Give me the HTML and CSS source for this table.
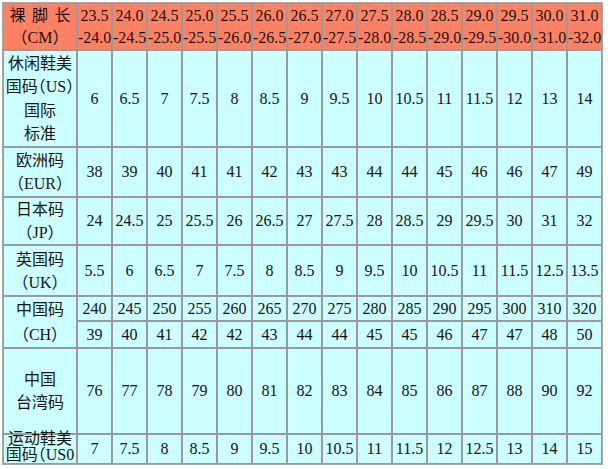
FILE: index.html
```html
<!DOCTYPE html>
<html lang="zh">
<head>
<meta charset="utf-8">
<title>鞋码对照表</title>
<link rel="stylesheet" href="styles.css">
</head>
<body>
<table class="size-table">
  <tr class="r-head">
    <td class="label head-label"><span class="spaced">裸 脚 长</span><br>（CM）</td>
    <td>23.5<br>-24.0</td><td>24.0<br>-24.5</td><td>24.5<br>-25.0</td><td>25.0<br>-25.5</td><td>25.5<br>-26.0</td><td>26.0<br>-26.5</td><td>26.5<br>-27.0</td><td>27.0<br>-27.5</td><td>27.5<br>-28.0</td><td>28.0<br>-28.5</td><td>28.5<br>-29.0</td><td>29.0<br>-29.5</td><td>29.5<br>-30.0</td><td>30.0<br>-31.0</td><td>31.0<br>-32.0</td>
  </tr>
  <tr class="r-us">
    <td class="label us-label">休闲鞋美<br>国码（US）<br>国际<br>标准</td>
    <td>6</td><td>6.5</td><td>7</td><td>7.5</td><td>8</td><td>8.5</td><td>9</td><td>9.5</td><td>10</td><td>10.5</td><td>11</td><td>11.5</td><td>12</td><td>13</td><td>14</td>
  </tr>
  <tr class="r-eur">
    <td class="label">欧洲码<br>（EUR）</td>
    <td>38</td><td>39</td><td>40</td><td>41</td><td>41</td><td>42</td><td>43</td><td>43</td><td>44</td><td>44</td><td>45</td><td>46</td><td>46</td><td>47</td><td>49</td>
  </tr>
  <tr class="r-jp">
    <td class="label">日本码<br>（JP）</td>
    <td>24</td><td>24.5</td><td>25</td><td>25.5</td><td>26</td><td>26.5</td><td>27</td><td>27.5</td><td>28</td><td>28.5</td><td>29</td><td>29.5</td><td>30</td><td>31</td><td>32</td>
  </tr>
  <tr class="r-uk">
    <td class="label">英国码<br>（UK）</td>
    <td>5.5</td><td>6</td><td>6.5</td><td>7</td><td>7.5</td><td>8</td><td>8.5</td><td>9</td><td>9.5</td><td>10</td><td>10.5</td><td>11</td><td>11.5</td><td>12.5</td><td>13.5</td>
  </tr>
  <tr class="r-ch1">
    <td class="label ch-label" rowspan="2">中国码<br>（CH）</td>
    <td>240</td><td>245</td><td>250</td><td>255</td><td>260</td><td>265</td><td>270</td><td>275</td><td>280</td><td>285</td><td>290</td><td>295</td><td>300</td><td>310</td><td>320</td>
  </tr>
  <tr class="r-ch2">
    <td>39</td><td>40</td><td>41</td><td>42</td><td>42</td><td>43</td><td>44</td><td>44</td><td>45</td><td>45</td><td>46</td><td>47</td><td>47</td><td>48</td><td>50</td>
  </tr>
  <tr class="r-tw">
    <td class="label">中国<br>台湾码</td>
    <td>76</td><td>77</td><td>78</td><td>79</td><td>80</td><td>81</td><td>82</td><td>83</td><td>84</td><td>85</td><td>86</td><td>87</td><td>88</td><td>90</td><td>92</td>
  </tr>
  <tr class="r-sport">
    <td class="label sport-label"><div class="sport-text">运动鞋美<br>国码（US0</div></td>
    <td>7</td><td>7.5</td><td>8</td><td>8.5</td><td>9</td><td>9.5</td><td>10</td><td>10.5</td><td>11</td><td>11.5</td><td>12</td><td>12.5</td><td>13</td><td>14</td><td>15</td>
  </tr>
</table>
</body>
</html>
```

FILE: styles.css
```css
html, body {
  margin: 0;
  padding: 0;
  background: #ffffff;
}

body {
  padding: 2px 0 0 2px;
}

.size-table {
  table-layout: fixed;
  width: 601px;
  border-collapse: separate;
  border-spacing: 0;
  border: 1px solid #a9a9a9;
  font-family: "Liberation Serif", "Noto Sans CJK SC", serif;
  font-size: 16px;
  color: #151515;
  background: #ccffff;
}

.size-table td {
  box-sizing: border-box;
  width: 35px;
  padding: 0;
  border: 1px solid #9a9a9a;
  text-align: center;
  vertical-align: middle;
  line-height: 22px;
  white-space: nowrap;
  overflow: visible;
}

.size-table td.label {
  width: 74px;
  line-height: 23px;
}

.r-head td {
  background: #ff8163;
  line-height: 22px;
}

.r-head td.head-label {
  line-height: 22px;
}

.spaced {
  word-spacing: 2.5px;
}

.r-head { height: 47px; }
.r-us { height: 97px; }
.r-eur { height: 50px; }
.r-jp { height: 48px; }
.r-uk { height: 51px; }
.r-ch1 { height: 25px; }
.r-ch2 { height: 26px; }
.r-tw { height: 86px; }
.r-sport { height: 30px; }

.r-ch1 td, .r-ch2 td {
  line-height: 20px;
}

.size-table td.us-label {
  line-height: 23.5px;
  font-feature-settings: "halt";
}

.size-table td.ch-label {
  line-height: 25px;
}

.size-table td.sport-label {
  line-height: 15px;
  font-feature-settings: "halt";
}

.sport-text {
  height: 28px;
  line-height: 16px;
  margin-top: -4px;
  margin-bottom: 4px;
}
```
